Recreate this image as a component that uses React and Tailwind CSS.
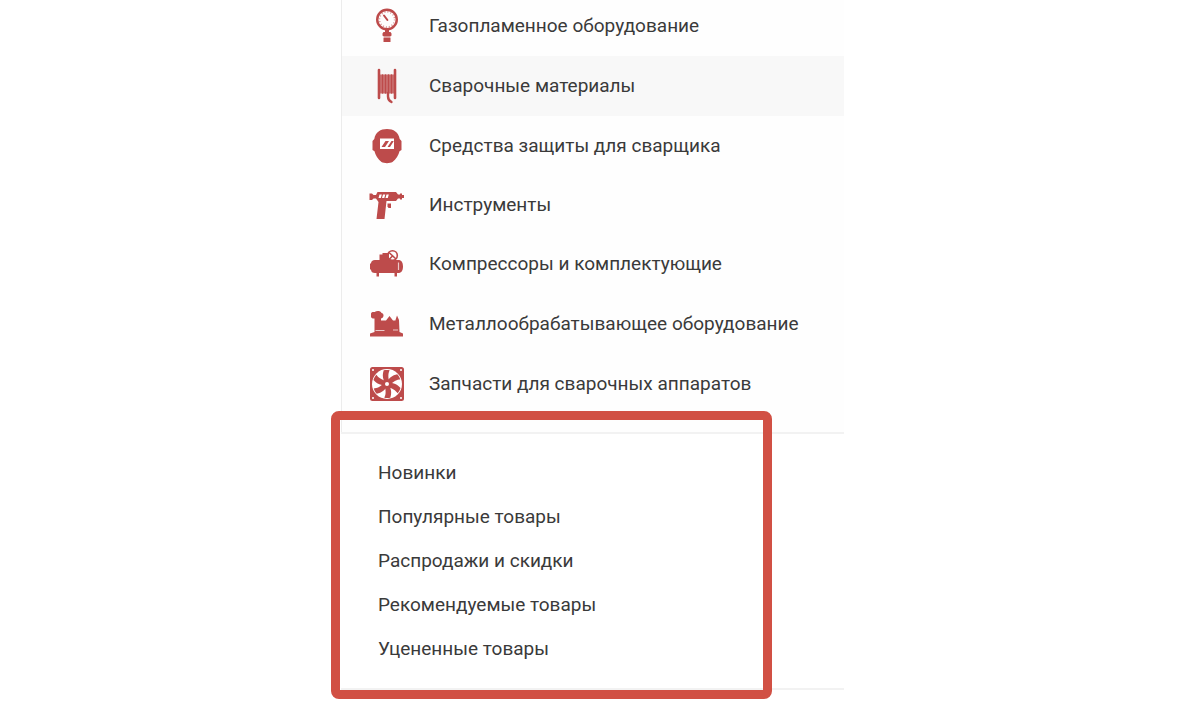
function GaugeIcon() {
  return (
    <svg viewBox="0 0 36 36" className="size-9" fill="none" stroke="currentColor">
      <circle cx="18" cy="11.5" r="9.800" strokeWidth="2.4" />
      <circle cx="18" cy="11.5" r="7.6" strokeWidth="1.6" strokeDasharray="1 2" opacity="0.6" />
      <path d="M15 7.500l3.400 4.500" strokeWidth="2" strokeLinecap="round" />
      <path d="M16 22h4v2h1.500l1 1.500v2l-1 1H21v1h.5V34h-7v-4.500h.5v-1h-.5l-1-1v-2l1-1.500H16z" fill="currentColor" stroke="none" />
      <path d="M14.500 29h7" stroke="#fff" strokeWidth="0.900" />
    </svg>
  );
}

function SpoolIcon() {
  return (
    <svg viewBox="0 0 36 36" className="size-9" fill="none" stroke="currentColor" strokeLinecap="round">
      <path d="M10 6.500h16v19H10z" fill="currentColor" stroke="none" opacity="0.75" />
      <path d="M10 2v28M26 2v28" strokeWidth="2.600" />
      <path d="M13.500 7v18M16.500 7v18M19.500 7v18M22.500 7v18" strokeWidth="1.500" />
      <path d="M19 25v3.500c0 3 1.500 4.500 3.500 5.500" strokeWidth="2.400" />
    </svg>
  );
}

function MaskIcon() {
  return (
    <svg viewBox="0 0 36 36" className="size-9" fill="currentColor">
      <path d="M18 1C11.500 1 6.500 4 5.300 11L3.500 13v9l2 1.200C6.200 27 9 31 12.500 34c2.500 1.500 8.500 1.500 11 0 3.500-3 6.300-7 7-10.800l2-1.200v-9l-1.800-2C29.500 4 24.500 1 18 1z" />
      <path d="M11 10.500h14V21H11z" fill="#fff" />
      <path d="M12.500 19l4-6H20l-4 6zM18.500 19l4-6h2v.5L21 19z" />
    </svg>
  );
}

function DrillIcon() {
  return (
    <svg viewBox="0 0 36 36" className="size-9" fill="currentColor">
      <path d="M.500 5.500H3L4.500 7H7l1.500-3h18.500L29 6.500h2v-1h2V7h2v3h-2v1.500h-2v-1h-2l-2 2.500H17.500L15.500 31H7.500l2-17L7 10.500H4.500L3 12H.500z" />
      <path d="M18.500 15.500h3.500v4.500h-2.500l-1-1.500z" />
      <path d="M10.500 6.500h2.300l-1 3.500H9.500zM14 6.500h2.300l-1 3.500H13zM17.500 6.500h2.300l-1 3.500h-2.300z" fill="#fff" />
    </svg>
  );
}

function CompressorIcon() {
  return (
    <svg viewBox="0 0 36 36" className="size-9" fill="currentColor">
      <path d="M1 16.500h1C2 14.500 3.500 13 6 13h23.500c2.500 0 4.500 2 4.500 6.500s-2 6.500-4.500 6.500H28v3.500h-2.500V26H10v3.500H7.500V26H6c-2.500 0-4-1-4-3.500H1z" />
      <path d="M10.500 7.500h3V6H20v8h-9.500z" />
      <circle cx="23.500" cy="8.500" r="4.800" fill="none" stroke="currentColor" strokeWidth="1.600" />
      <path d="M20 5.500l7 6.500M24 8.500l-4 4" fill="none" stroke="currentColor" strokeWidth="1.600" />
      <path d="M29.500 15.500V23" stroke="#fff" strokeWidth="1.200" opacity="0.700" />
    </svg>
  );
}

function LatheIcon() {
  return (
    <svg viewBox="0 0 36 36" className="size-9" fill="currentColor">
      <path d="M2 8c0-1.500 1-2 2.500-2h1.200C7.500 4.500 11.500 4.500 12.500 7c1.200.300 2 1 2 2.200s-.5 2.800-2.500 3.300v2h5l3.500-4.500 3.500 4.500h2.500V14l1.500-4.500L30 14l.5 12 3.500 1.500V30.500H1V27.500L5.500 26V12.500H4C2.700 12.300 2 11.500 2 10.500z" />
      <path d="M6.500 24.500h9M24 24h5" stroke="#fff" strokeWidth="1" opacity="0.700" />
    </svg>
  );
}

function FanIcon() {
  return (
    <svg viewBox="0 0 36 36" className="size-9">
      <rect x="1" y="1" width="34" height="34" rx="2.500" fill="currentColor" />
      <circle cx="18" cy="18" r="15" fill="#fff" />
      <g fill="currentColor">
        {[0, 60, 120, 180, 240, 300].map((angle) => (
          <path key={angle} d="M15.500 17.500l-1.500-6c-.4-2.500 0-5 .7-7.200 2.200-.6 4.300-.5 6 0-1.500 2.900-1.800 6-.5 11.700z" transform={`rotate(${angle} 18 18)`} />
        ))}
        <circle cx="18" cy="18" r="4.200" />
      </g>
      <circle cx="18" cy="18" r="2" fill="#fff" />
      <g fill="#fff">
        <circle cx="4" cy="4" r="1" />
        <circle cx="32" cy="4" r="1" />
        <circle cx="4" cy="32" r="1" />
        <circle cx="32" cy="32" r="1" />
      </g>
    </svg>
  );
}

const categories = [
  { name: "Газопламенное оборудование", icon: GaugeIcon, row: "h-[60px]" },
  { name: "Сварочные материалы", icon: SpoolIcon, row: "h-[60px] bg-[#f8f8f8]" },
  { name: "Средства защиты для сварщика", icon: MaskIcon, row: "h-[60px]" },
  { name: "Инструменты", icon: DrillIcon, row: "h-[59px]" },
  { name: "Компрессоры и комплектующие", icon: CompressorIcon, row: "h-[59px]" },
  { name: "Металлообрабатывающее оборудование", icon: LatheIcon, row: "h-[60px]" },
  { name: "Запчасти для сварочных аппаратов", icon: FanIcon, row: "h-[60px]" },
];

const collections = [
  "Новинки",
  "Популярные товары",
  "Распродажи и скидки",
  "Рекомендуемые товары",
  "Уцененные товары",
];

export default function App() {
  return (
    <div className="overflow-hidden bg-white pb-4 font-[Roboto,sans-serif] text-[19px] font-normal text-[#3a3a3a]">
      <div className="mx-auto max-w-[516px] pr-[13px]">
        <nav className="-mt-1 border-l border-[#ececec] bg-[#fefefe] pb-[18px]">
          {categories.map(({ name, icon: Icon, row }) => (
            <a key={name} href="#" className={`flex items-center gap-6 pl-[27px] ${row}`}>
              <span className="shrink-0 text-[#bd4b4b]">
                <Icon />
              </span>
              <span className="whitespace-nowrap">{name}</span>
            </a>
          ))}
        </nav>

        {/* COLLECTIONS */}
        <nav className="relative border-y-2 border-[#f2f2f2] py-[17px]">
          {collections.map((name) => (
            <a key={name} href="#" className="flex h-11 items-center pl-[37px]">
              {name}
            </a>
          ))}
          {/* red highlight over the block */}
          <div className="pointer-events-none absolute -top-[23px] right-[72px] -bottom-[11px] -left-[10px] rounded-lg border-[9px] border-[#d15044]" />
        </nav>
      </div>
    </div>
  );
}
